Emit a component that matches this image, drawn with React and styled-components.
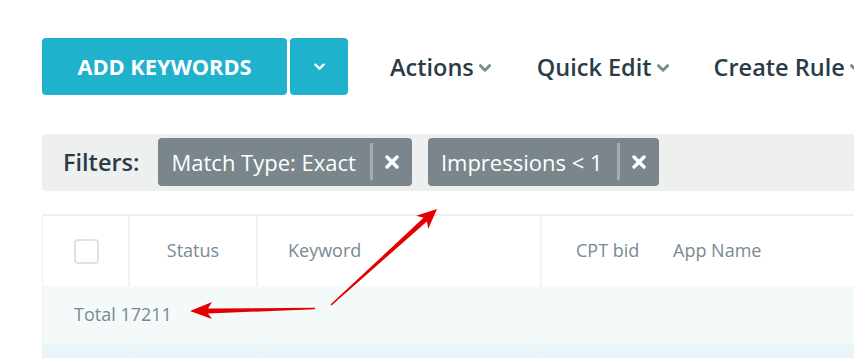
import React from "react";
import styled, { createGlobalStyle } from "styled-components";

const Global = createGlobalStyle`
  html, body { margin: 0; padding: 0; background: #fff; overflow: hidden; }
  body { font-family: "Open Sans", "Noto Sans", sans-serif; }
`;

const Page = styled.div`
  position: relative;
  width: 854px;
  height: 358px;
  overflow: hidden;
  padding: 38px 0 0 42px;
  box-sizing: border-box;
`;

const Toolbar = styled.div`
  display: flex;
  align-items: center;
  height: 57px;
  width: 1000px;
`;

const PrimaryButton = styled.button`
  height: 57px;
  width: ${(p) => p.$w}px;
  margin-right: ${(p) => p.$mr || 0}px;
  border: none;
  border-radius: 4px;
  background: #20b2cc;
  color: #fff;
  font-family: "Open Sans", sans-serif;
  font-weight: 700;
  font-size: 21.8px;
  display: flex;
  align-items: center;
  justify-content: center;
  padding: 0;
  flex-shrink: 0;
`;

const MenuItem = styled.div`
  display: flex;
  align-items: center;
  margin-left: ${(p) => p.$ml}px;
  font-size: 23.5px;
  font-weight: 600;
  color: #2a3c47;
  white-space: nowrap;
  gap: 5px;
  svg { margin-top: 4px; }
`;

const FilterBar = styled.div`
  display: flex;
  align-items: center;
  height: 57px;
  width: 1000px;
  margin-top: 39px;
  background: #eeefef;
  border-radius: 4px 0 0 4px;
  padding: 0 0 2px 21px;
  box-sizing: border-box;
`;

const FilterLabel = styled.span`
  font-size: 23.5px;
  font-weight: 600;
  color: #2a3c47;
  margin-right: 19px;
`;

const Chip = styled.div`
  display: flex;
  align-items: center;
  height: 48px;
  border-radius: 4px;
  background: #7a868c;
  color: #fff;
  margin-right: 16px;
  padding: 0 13px;
  font-size: 22px;
  font-weight: 400;
  white-space: nowrap;
`;

const ChipSep = styled.span`
  width: 3px;
  height: 37px;
  background: #a3acb1;
  margin: 0 12px 0 14px;
`;

const Table = styled.div`
  margin-top: 23px;
  width: 1000px;
  border-top: 2px solid #eff1f2;
  border-left: 1px solid #eff1f2;
`;

const Row = styled.div`
  display: flex;
  height: ${(p) => p.$h}px;
  background: ${(p) => p.$bg};
`;

const Cell = styled.div`
  display: flex;
  align-items: center;
  justify-content: ${(p) => (p.$center ? "center" : "flex-start")};
  width: ${(p) => p.$w}px;
  padding-left: ${(p) => p.$pl || 0}px;
  padding-bottom: 3px;
  box-sizing: border-box;
  border-right: ${(p) => (p.$border ? "2px solid #f1f3f4" : "none")};
  font-size: 18px;
  color: #7a8a92;
  white-space: nowrap;
  flex-shrink: 0;
`;

const Checkbox = styled.span`
  width: 25px;
  height: 25px;
  box-sizing: border-box;
  border: 2px solid #dde2e5;
  border-radius: 4px;
  margin-left: 31px;
  margin-top: 3px;
`;

const TotalCell = styled.div`
  display: flex;
  align-items: center;
  padding: 0 0 3px 31px;
  font-size: 18px;
  color: #7a8a92;
`;

const Annotations = styled.svg`
  position: absolute;
  left: 0;
  top: 0;
  pointer-events: none;
`;

const Chevron = ({ color, size = 12, sw = 3 }) => (
  <svg width={size} height={size * 0.7} viewBox="0 0 12 8">
    <path d="M1.5 1.5 L6 6 L10.5 1.5" fill="none" stroke={color} strokeWidth={sw} strokeLinecap="round" strokeLinejoin="round" />
  </svg>
);

const CloseX = () => (
  <svg width="14" height="14" viewBox="0 0 14 14">
    <path d="M2 2 L12 12 M12 2 L2 12" stroke="#fff" strokeWidth="3.4" strokeLinecap="round" />
  </svg>
);

export default function App() {
  return (
    <>
      <Global />
      <Page>
        <Toolbar>
          <PrimaryButton $w={245} $mr={3}>ADD KEYWORDS</PrimaryButton>
          <PrimaryButton $w={58}>
            <Chevron color="#fff" size={11} sw={2.6} />
          </PrimaryButton>
          <MenuItem $ml={42}>Actions<Chevron color="#7b8b93" /></MenuItem>
          <MenuItem $ml={46}>Quick Edit<Chevron color="#7b8b93" /></MenuItem>
          <MenuItem $ml={45}>Create Rule<Chevron color="#7b8b93" /></MenuItem>
        </Toolbar>
        <FilterBar>
          <FilterLabel>Filters:</FilterLabel>
          <Chip>
            Match Type: Exact<ChipSep /><CloseX />
          </Chip>
          <Chip>
            Impressions &lt; 1<ChipSep /><CloseX />
          </Chip>
        </FilterBar>
        <Table>
          <Row $h={70} $bg="#fff">
            <Cell $w={87} $border><Checkbox /></Cell>
            <Cell $w={128} $border $center>Status</Cell>
            <Cell $w={284} $border $pl={30}>Keyword</Cell>
            <Cell $w={131} $pl={34}>CPT bid</Cell>
            <Cell $w={200}>App Name</Cell>
          </Row>
          <Row $h={58} $bg="#f4f9fa">
            <TotalCell>Total 17211</TotalCell>
          </Row>
          <Row $h={20} $bg="#e9f5f9">
            <Cell $w={87} $border />
            <Cell $w={128} $border />
            <Cell $w={284} $border />
          </Row>
        </Table>
        <Annotations width="854" height="358" viewBox="0 0 854 358">
          <polygon
            points="315,307.8 208,308.5 212,302 190,311 212,319 208,313.5 315,309.3"
            fill="#e50000"
          />
          <polygon
            points="330.5,304.5 423.5,217.8 416.2,215.7 437,209 428.2,229.1 426.9,221.5 331.5,305.5"
            fill="#e50000"
          />
        </Annotations>
      </Page>
    </>
  );
}
